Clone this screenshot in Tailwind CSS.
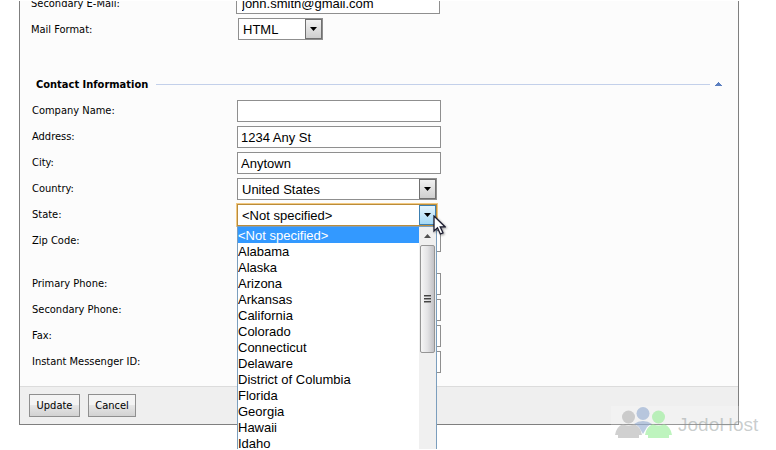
<!DOCTYPE html>
<html lang="en">
<head>
    <meta charset="UTF-8">
    <meta name="viewport" content="width=device-width, initial-scale=1.0">
    <title>Contact Information</title>
    <script src="https://cdn.jsdelivr.net/npm/@tailwindcss/browser@4"></script>
</head>
<body class="h-screen overflow-hidden bg-white pt-px font-['Tahoma','DejaVu_Sans_Condensed','Open_Sans',sans-serif] text-[11px] leading-4 text-black">
    <form class="mr-[37px] ml-[19px] border border-t-0 border-[#7f7f7f] bg-[#fcfcfc]">
        <!-- Mail settings -->
        <div class="flex h-[39px] flex-col justify-end gap-1 overflow-hidden pl-[11px]">
            <div class="flex h-[22px] shrink-0 items-center">
                <label for="email2" class="w-[205px] pt-0.5">Secondary E-Mail:</label>
                <input id="email2" type="text" value="john.smith@gmail.com" class="h-[22px] w-[204px] border border-[#8f8f8f] bg-white px-[5px] font-['Liberation_Sans',sans-serif] text-[13px]">
            </div>
            <div class="flex h-[22px] shrink-0 items-center">
                <label for="format" class="w-[207px] pt-0.5">Mail Format:</label>
                <div class="grid h-[22px] w-[85px] border border-[#8f8f8f] bg-white">
                    <select id="format" class="col-start-1 row-start-1 appearance-none pt-0.5 pl-1 font-['Liberation_Sans',sans-serif] text-[13px] outline-none">
                        <option>HTML</option>
                        <option>Text</option>
                    </select>
                    <span class="pointer-events-none col-start-1 row-start-1 flex w-[17px] items-center justify-center justify-self-end border border-[#707070] bg-linear-to-b from-[#f2f2f2] to-[#cfcfcf]">
                        <svg class="h-1 w-[7px]" viewBox="0 0 7 4"><path d="M0 0h7L3.500 4z"/></svg>
                    </span>
                </div>
            </div>
        </div>

        <!-- Section heading -->
        <div class="mt-[34px] flex h-5 items-center pr-4 pl-4">
            <h2 class="pt-0.5 text-[11px] font-bold">Contact Information</h2>
            <div class="ml-2 h-px flex-1 bg-[#c3d0ea]"></div>
            <svg class="ml-[5px] h-1 w-[7px]" viewBox="0 0 7 4" shape-rendering="crispEdges"><path d="M3 0h1v1h1v1h1v1h1v1H0V3h1V2h1V1h1z" fill="#5b7fc0"/></svg>
        </div>

        <div class="flex flex-col gap-1 pt-1.5 pb-[13px] pl-3">
            <div class="flex h-[22px] items-center">
                <label for="company" class="w-[205px]">Company Name:</label>
                <input id="company" type="text" class="h-[22px] w-[204px] border border-[#8f8f8f] bg-white px-[3px] font-['Liberation_Sans',sans-serif] text-[13px]">
            </div>
            <div class="flex h-[22px] items-center">
                <label for="address" class="w-[205px]">Address:</label>
                <input id="address" type="text" value="1234 Any St" class="h-[22px] w-[204px] border border-[#8f8f8f] bg-white px-[3px] font-['Liberation_Sans',sans-serif] text-[13px]">
            </div>
            <div class="flex h-[22px] items-center">
                <label for="city" class="w-[205px]">City:</label>
                <input id="city" type="text" value="Anytown" class="h-[22px] w-[204px] border border-[#8f8f8f] bg-white px-[3px] font-['Liberation_Sans',sans-serif] text-[13px]">
            </div>
            <div class="flex h-[22px] items-center">
                <label for="country" class="w-[205px]">Country:</label>
                <div class="grid h-[22px] w-[200px] border border-[#8f8f8f] bg-white">
                    <select id="country" class="col-start-1 row-start-1 appearance-none pt-0.5 pl-1 font-['Liberation_Sans',sans-serif] text-[13px] outline-none">
                        <option>United States</option>
                    </select>
                    <span class="pointer-events-none col-start-1 row-start-1 flex w-[17px] items-center justify-center justify-self-end border border-[#707070] bg-linear-to-b from-[#f2f2f2] to-[#cfcfcf]">
                        <svg class="h-1 w-[7px]" viewBox="0 0 7 4"><path d="M0 0h7L3.500 4z"/></svg>
                    </span>
                </div>
            </div>
            <div class="flex h-[22px] items-center">
                <label for="state" class="w-[205px]">State:</label>
                <div class="relative grid h-[22px] w-[200px] border border-[#b98c3c] bg-white shadow-[0_0_0_1px_#f3c980]">
                    <select id="state" class="col-start-1 row-start-1 appearance-none pt-0.5 pl-1 font-['Liberation_Sans',sans-serif] text-[13px] outline-none">
                        <option>&lt;Not specified&gt;</option>
                    </select>
                    <span class="pointer-events-none col-start-1 row-start-1 flex w-[17px] items-center justify-center justify-self-end border border-[#3c7fb1] bg-linear-to-b from-[#e5f4fc] to-[#a3d8f5]">
                        <svg class="h-1 w-[7px]" viewBox="0 0 7 4"><path d="M0 0h7L3.500 4z"/></svg>
                    </span>

                    <!-- Open list -->
                    <div class="absolute top-full -left-px z-10 mt-px flex h-[223px] w-[200px] border border-b-0 border-[#7b9ebd] bg-white">
                        <ul id="states" role="listbox" aria-label="State" class="flex-1 overflow-hidden font-['Liberation_Sans',sans-serif] text-[13px] leading-[18px]">
                            <li role="option" aria-selected="true" class="h-4 bg-[#3399ff] text-white">&lt;Not specified&gt;</li>
                        </ul>
                        <div class="flex w-[17px] flex-col items-center bg-[#f0f0f0]">
                            <div class="flex h-[18px] items-center"><svg class="h-1 w-[7px]" viewBox="0 0 7 4"><path d="M0 4h7L3.500 0z" fill="#505050"/></svg></div>
                            <div class="flex h-[108px] w-[15px] flex-col items-center justify-center gap-px rounded-xs border border-[#959595] bg-linear-to-r from-[#f6f6f6] via-[#e3e3e5] to-[#c2c2c6]">
                                <div class="h-0.5 w-[7px] border-t border-[#444] bg-[#999]"></div>
                                <div class="h-0.5 w-[7px] border-t border-[#444] bg-[#999]"></div>
                                <div class="h-0.5 w-[7px] border-t border-[#444] bg-[#999]"></div>
                            </div>
                        </div>
                    </div>

                    <!-- Mouse pointer -->
                    <svg class="absolute top-[10px] left-[195px] z-20 h-[20px] w-[13px] drop-shadow-[1px_1px_1px_#0006]" viewBox="0 0 13 20"><path d="M1 1v15l3.500-3.200 2.800 6.200 2.700-1.200-2.800-6H12z" fill="#fff" stroke="#1c1c30" stroke-width="1.300"/></svg>
                </div>
            </div>
            <div class="flex h-[22px] items-center">
                <label for="zip" class="w-[205px]">Zip Code:</label>
                <input id="zip" type="text" class="h-[22px] w-[204px] border border-[#8f8f8f] bg-white px-[3px]">
            </div>
            <div class="mt-[17px] flex h-[22px] items-center">
                <label for="phone" class="w-[205px]">Primary Phone:</label>
                <input id="phone" type="text" class="h-[22px] w-[204px] border border-[#8f8f8f] bg-white px-[3px]">
            </div>
            <div class="flex h-[22px] items-center">
                <label for="phone2" class="w-[205px]">Secondary Phone:</label>
                <input id="phone2" type="text" class="h-[22px] w-[204px] border border-[#8f8f8f] bg-white px-[3px]">
            </div>
            <div class="flex h-[22px] items-center">
                <label for="fax" class="w-[205px]">Fax:</label>
                <input id="fax" type="text" class="h-[22px] w-[204px] border border-[#8f8f8f] bg-white px-[3px]">
            </div>
            <div class="flex h-[22px] items-center">
                <label for="im" class="w-[205px]">Instant Messenger ID:</label>
                <input id="im" type="text" class="h-[22px] w-[204px] border border-[#8f8f8f] bg-white px-[3px]">
            </div>
        </div>

        <div class="flex gap-2 border-t border-[#dcdcdc] bg-[#efefef] px-[9px] py-[7px]">
            <button type="submit" class="h-[23px] w-[51px] border border-[#8f8f8f] bg-linear-to-b from-[#f4f4f4] from-50% via-[#e6e6e6] via-50% to-[#d2d2d2] pt-px">Update</button>
            <button type="button" class="h-[23px] w-12 border border-[#8f8f8f] bg-linear-to-b from-[#f4f4f4] from-50% via-[#e6e6e6] via-50% to-[#d2d2d2] pt-px">Cancel</button>
        </div>
    </form>

    <!-- Watermark -->
    <div class="absolute right-0 bottom-0 flex h-[44px] w-[165px] bg-white/20">
        <svg class="h-[44px] w-[67px]" viewBox="0 0 67 44">
            <g fill="#8fa9cf" fill-opacity=".6"><circle cx="32" cy="7.500" r="6.500"/><path d="M23 18q4-3 9-3t9 3q-5 2-6 5l-3 5-3-5q-1-3-6-5z"/></g>
            <g fill="#b0b0b0" fill-opacity=".6"><circle cx="17.500" cy="11" r="6.500"/><path d="M4 29q1-8 8-11 5.500 3 11 0 7 3 8 11h-3v3H7v-3z"/></g>
            <g fill="#93ec93" fill-opacity=".6"><circle cx="47.500" cy="11" r="6.500"/><path d="M34 29q1-8 8-11 5.500 3 11 0 7 3 8 11h-3v3H37v-3z"/></g>
        </svg>
        <span class="pt-[7px] font-['Liberation_Sans',sans-serif] text-[19px] leading-6 text-[#879090]/45">JodoHost</span>
    </div>

    <script>
        const states = ["Alabama", "Alaska", "Arizona", "Arkansas", "California", "Colorado", "Connecticut", "Delaware", "District of Columbia", "Florida", "Georgia", "Hawaii", "Idaho"];
        const list = document.getElementById("states");
        const select = document.getElementById("state");

        states.forEach((name) => {
            const item = document.createElement("li");
            item.setAttribute("role", "option");
            item.className = "h-4";
            item.textContent = name;
            list.appendChild(item);
            select.add(new Option(name));
        });
    </script>
</body>
</html>
